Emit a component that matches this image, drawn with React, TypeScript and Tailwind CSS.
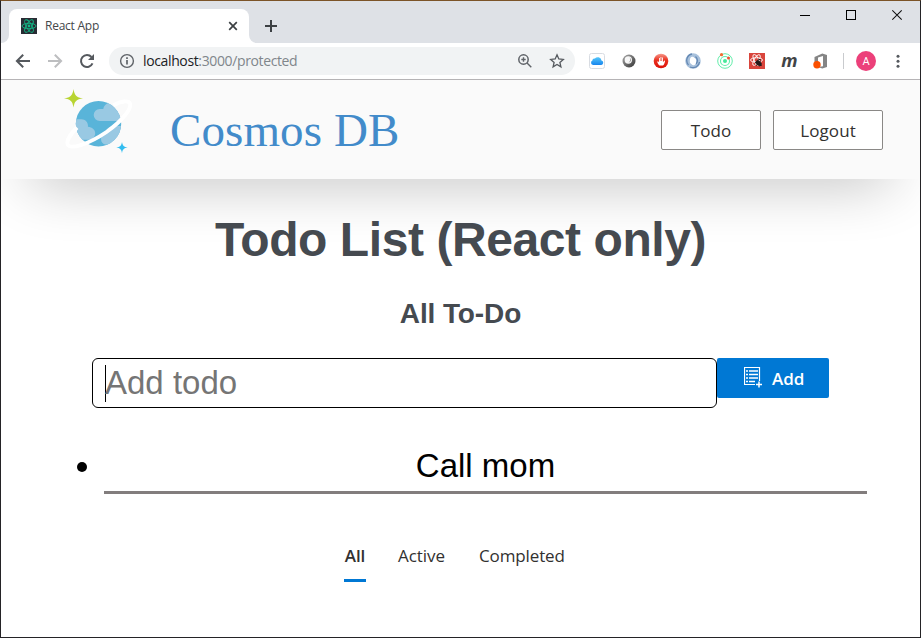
import React from "react";

const segoe = "font-['Open_Sans','Noto_Sans',sans-serif]";
const arial = "font-['Liberation_Sans',Arial,sans-serif]";

function TabStrip() {
  return (
    <div className="flex h-[42px] w-full bg-[#dee1e6]">
      <div className="flex h-full w-2 items-end bg-white">
        <div className="h-full w-2 rounded-br-lg bg-[#dee1e6]" />
      </div>
      <div className="mt-2 flex h-[34px] w-60 items-center rounded-t-lg bg-white pl-3">
        <svg width="16" height="16" viewBox="0 0 16 16">
          <rect width="16" height="16" fill="#282c34" />
          <g fill="none" stroke="#12b886" strokeWidth="0.9">
            <ellipse cx="8" cy="8" rx="7" ry="2.7" />
            <ellipse cx="8" cy="8" rx="7" ry="2.7" transform="rotate(60 8 8)" />
            <ellipse cx="8" cy="8" rx="7" ry="2.7" transform="rotate(120 8 8)" />
          </g>
          <circle cx="8" cy="8" r="1.4" fill="#12b886" />
        </svg>
        <span className={`ml-2 w-[170px] text-[12px] leading-4 tracking-[-0.25px] text-[#45474a] ${segoe}`}>React App</span>
        <svg className="ml-[13px]" width="10" height="10" viewBox="0 0 10 10">
          <path d="M1.2 1.2 8.8 8.8M8.8 1.2 1.2 8.8" stroke="#3c4043" strokeWidth="1.7" />
        </svg>
      </div>
      <div className="h-full w-2 bg-white">
        <div className="h-full w-2 rounded-bl-lg bg-[#dee1e6]" />
      </div>
      <svg className="ml-2 mt-[19px]" width="12" height="12" viewBox="0 0 12 12">
        <path d="M6 0v12M0 6h12" stroke="#3c4043" strokeWidth="2" />
      </svg>
      <div className="ml-auto mr-[17px] mt-2 flex h-3 gap-9">
        <svg width="10" height="12" viewBox="0 0 10 12"><path d="M0 6.5h10" stroke="#000" /></svg>
        <svg width="10" height="12" viewBox="0 0 10 12"><rect x=".5" y="1.5" width="9" height="9" fill="none" stroke="#000" /></svg>
        <svg width="11" height="12" viewBox="0 0 11 12"><path d="m.3 1.300 9.400 9.400M9.700 1.300.300 10.700" stroke="#111" strokeWidth="1.1" /></svg>
      </div>
    </div>
  );
}

function Extensions() {
  return (
    <div className="ml-[14px] flex items-center gap-4">
      <svg width="16" height="16" viewBox="0 0 16 16">
        <rect x=".5" y=".5" width="15" height="15" rx="2" fill="#fff" stroke="#d8dce2" />
        <defs><linearGradient id="cloud" x1="0" y1="0" x2="0" y2="1"><stop stopColor="#55c8fa" /><stop offset="1" stopColor="#1785ee" /></linearGradient></defs>
        <path d="M4.300 12a2.300 2.300 0 0 1-.9-4.400 2.100 2.100 0 0 1 2.500-2 3.700 3.700 0 0 1 6.600 1.900 2.300 2.300 0 0 1-.2 4.500z" fill="url(#cloud)" />
      </svg>
      <svg width="16" height="16" viewBox="0 0 16 16">
        <defs><linearGradient id="grey" x1="0" y1="0" x2="1" y2="1"><stop stopColor="#aaa" /><stop offset="1" stopColor="#333" /></linearGradient></defs>
        <circle cx="8" cy="8" r="6.500" fill="url(#grey)" />
        <circle cx="7.300" cy="7" r="3.700" fill="#f7f7f7" />
        <path d="M8.500 4.500c1.500 1.500 1 4-1 5 2.500-.2 3.500-3.500 1-5z" fill="#777" />
      </svg>
      <svg width="16" height="16" viewBox="0 0 16 16">
        <defs><linearGradient id="red" x1="0" y1="0" x2="0" y2="1"><stop stopColor="#f79a8c" /><stop offset=".45" stopColor="#e9301f" /><stop offset="1" stopColor="#dc1108" /></linearGradient></defs>
        <circle cx="8" cy="8" r="7.300" fill="url(#red)" />
        <path d="M6.500 12.500c-1.200-.8-1.900-2.500-2.300-3.800l.8-.4 1 1V5h.9v3h.6V4h.9v4H9V4.500h.9V8.500l.6.200.9-1.200.7.300c-.3 2-.9 4-2.100 4.700z" fill="#fff" />
      </svg>
      <svg width="16" height="16" viewBox="0 0 16 16">
        <circle cx="8" cy="8" r="5.500" fill="none" stroke="#a8c1dc" strokeWidth="4.500" />
        <path d="M7 1C2 2 0 8 3.500 12M5 14c5 2 9-1 9.500-5M10.500 3.500c2 2 2.500 5 .5 7.500" fill="none" stroke="#6488b3" strokeWidth="1.300" />
        <ellipse cx="8" cy="8" rx="2.600" ry="4.300" fill="#fff" transform="rotate(-15 8 8)" />
      </svg>
      <svg width="16" height="16" viewBox="0 0 16 16">
        <g fill="none" stroke="#62edaa"><circle cx="8" cy="8" r="7.300" strokeWidth="1" /><circle cx="8" cy="8" r="4.500" strokeWidth="1.100" /></g>
        <circle cx="8" cy="8" r="2" fill="#47e99a" /><circle cx="4.500" cy="1.700" r="1.600" fill="#f26b32" /><circle cx="11.500" cy="5" r="1.500" fill="#f05432" />
      </svg>
      <svg width="16" height="16" viewBox="0 0 16 16">
        <rect width="16" height="16" fill="#d9453c" />
        <g fill="none" stroke="#fff" strokeWidth=".9"><ellipse cx="7.500" cy="7" rx="6" ry="2.300" /><ellipse cx="7.500" cy="7" rx="6" ry="2.300" transform="rotate(60 7.500 7)" /><ellipse cx="7.500" cy="7" rx="6" ry="2.300" transform="rotate(120 7.500 7)" /></g>
        <ellipse cx="9.500" cy="10" rx="2.300" ry="3.200" fill="#251b1b" transform="rotate(-35 9.500 10)" />
        <path d="m6 9.500 7 1.500M7 12.500l5-4M9 6l3 1M10 13l3-1" stroke="#251b1b" />
      </svg>
      <span className="flex w-4 justify-center font-['Open_Sans',sans-serif] text-[18px] font-bold italic leading-4 tracking-[-1px] text-[#424446]"><span className="-mt-0.5">m</span></span>
      <svg width="16" height="16" viewBox="0 0 16 16">
        <path d="M1.500 4 9.300.5 14 2v12l-4.700 1.500L5 14l5-.8V3L5 4.500V9H1.500z" fill="#858585" />
        <circle cx="4" cy="11.700" r="3.700" fill="#fa5000" />
      </svg>
    </div>
  );
}

function Toolbar() {
  return (
    <div className="flex h-9 w-full items-center bg-white">
      <div className="ml-[14px] flex items-center gap-4">
        <svg width="16" height="16" viewBox="0 0 16 16"><path d="M15 8H2M8.200 1.700 1.900 8l6.300 6.300" fill="none" stroke="#55595e" strokeWidth="2" /></svg>
        <svg width="16" height="16" viewBox="0 0 16 16"><path d="M1 8h13M7.800 1.700 14.100 8l-6.300 6.300" fill="none" stroke="#bdbec0" strokeWidth="2" /></svg>
        <svg width="16" height="16" viewBox="0 0 16 16"><path d="M13.500 10.400A6 6 0 1 1 12.500 4" fill="none" stroke="#55595e" strokeWidth="2" /><path d="M15 1v6H9z" fill="#55595e" /></svg>
      </div>
      <div className="ml-[14px] flex h-7 w-[466px] items-center rounded-full bg-[#f1f3f4] pl-[10px] pr-[10px]">
        <svg width="16" height="16" viewBox="0 0 16 16"><circle cx="8" cy="8" r="6.400" fill="none" stroke="#5f6368" strokeWidth="1.400" /><path d="M8 7v4.500M8 4.200v1.700" stroke="#5f6368" strokeWidth="1.700" /></svg>
        <span className={`ml-2 text-[14px] leading-5 tracking-[-0.37px] text-[#80868b] ${segoe}`}><span className="text-[#202124]">localhost</span>:3000/protected</span>
        <svg className="ml-auto" width="16" height="16" viewBox="0 0 16 16"><circle cx="6.500" cy="6.500" r="4.700" fill="none" stroke="#5f6368" strokeWidth="1.500" /><path d="m10 10 4.300 4.300M6.500 4.300v4.400M4.300 6.500h4.400" stroke="#5f6368" strokeWidth="1.400" /></svg>
        <svg className="ml-4" width="16" height="16" viewBox="0 0 16 16"><path d="m8 1.800 1.800 4.200 4.500.4-3.400 3 1 4.400L8 11.500l-3.900 2.300 1-4.400-3.400-3 4.500-.4z" fill="none" stroke="#55595e" strokeWidth="1.300" /></svg>
      </div>
      <Extensions />
      <div className="ml-[14px] h-4 w-px bg-[#c9cbce]" />
      <div className="ml-3 flex size-5 items-center justify-center rounded-full bg-[#ec407a] font-['Roboto',sans-serif] text-[11px] leading-none text-white">A</div>
      <svg className="ml-5" width="4" height="16" viewBox="0 0 4 16" fill="#55595e"><circle cx="2" cy="3.300" r="1.500" /><circle cx="2" cy="8.300" r="1.500" /><circle cx="2" cy="13.300" r="1.500" /></svg>
    </div>
  );
}

function CosmosLogo() {
  return (
    <svg width="70" height="66" viewBox="0 0 70 66">
      <defs><clipPath id="planet"><circle cx="35.500" cy="34.700" r="22.700" /></clipPath></defs>
      <circle cx="35.500" cy="34.700" r="22.700" fill="#59b4d9" />
      <g clipPath="url(#planet)" fill="#99c9e3">
        <path d="M60 32H36.700a6 6 0 0 1 0-12h3.600c.7-4 4-6.500 8-6.500L60 12z" />
        <path d="M10 30.200h8.500c4 0 7 3.500 6.400 7.500 4.300.5 7.300 3 7.300 6.500 0 3.600-3 6.500-6.500 6.500H10z" />
        <path d="M60 37h-9c-5 0-8.500 3.500-8.500 7.500-3 .8-4.500 3-4.500 5.500 0 3.200 2 5 4.500 5.500H60z" />
      </g>
      <path d="M50.500 16.200C58 12 65.500 11 67 14.500c2 5-8 17.700-23.500 28.500C25 55.500 8 60.500 5 56c-2-3.200 1.500-10 9-17.500" fill="none" stroke="#fff" strokeWidth="3.900" />
      <path d="M10.500 0c1 6.600 2.900 8.400 9.500 9.300-6.600.9-8.500 3-9.500 9.300C9.600 12.300 7.600 10.200 1 9.300 7.600 8.400 9.600 6.600 10.500 0z" fill="#b8d432" />
      <path d="M59 53c.6 3.700 1.900 5 5.700 5.600-3.800.6-5.100 1.900-5.700 5.600-.6-3.700-1.900-5-5.700-5.600 3.800-.6 5.100-1.900 5.700-5.600z" fill="#32bdf0" />
    </svg>
  );
}

function SiteHeader() {
  const button = `flex h-10 items-center justify-center rounded-[2px] border border-[#8a8886] bg-white pt-0.5 text-[17px] font-medium tracking-[0.1px] text-[#323130] ${segoe}`;
  return (
    <header className="flex h-[99px] w-full bg-[#fafafa] shadow-[0_30px_60px_-30px_rgba(0,0,0,0.32)]">
      <div className="ml-[62px] mt-[9px]"><CosmosLogo /></div>
      <div className="ml-[37px] mt-[21px] whitespace-nowrap font-['Liberation_Serif','Times_New_Roman',serif] text-[47px] leading-[58px] tracking-[0.1px] text-[#428bca]">Cosmos DB</div>
      <div className="ml-auto mr-[37px] mt-[30px] flex gap-3">
        <button className={`${button} w-[100px]`}>Todo</button>
        <button className={`${button} w-[110px]`}>Logout</button>
      </div>
    </header>
  );
}

function TodoForm() {
  return (
    <form className="ml-[91px] mt-[28px] flex h-[50px] items-start">
      <div className={`flex h-[50px] w-[625px] items-center rounded-md border border-black bg-white pl-3 text-[33px] text-[#757575] ${arial}`}>
        <span className="h-[37px] w-px bg-black" />
        <span className="-ml-px leading-[38px]">Add todo</span>
      </div>
      <button className={`flex h-10 w-28 items-center rounded-[2px] bg-[#0078d4] pl-[27px] text-[17px] font-semibold text-white ${segoe}`}>
        <svg className="-mt-px" width="19" height="21" viewBox="0 0 19 21" fill="none" stroke="#fff">
          <path d="M11 17.500H.5V.5h15V14" strokeWidth="1.200" />
          <path d="M2 4h2m1 0h9M2 7.500h2m1 0h9M2 11h2m1 0h9M2 14.500h2m1 0h6" strokeWidth="1.400" />
          <path d="M15 14.500v6M12 17.500h6" strokeWidth="1.500" />
        </svg>
        <span className="ml-[9px] pt-0.5">Add</span>
      </button>
    </form>
  );
}

export default function App() {
  return (
    <div className="flex h-[638px] w-[921px] flex-col overflow-hidden border border-[#242326] border-t-[#7c5428] bg-white">
      <TabStrip />
      <Toolbar />
      <div className="h-px w-full shrink-0 bg-[#b6b4b6]" />
      <SiteHeader />
      <main className="w-full">
        <h1 className={`mt-[33px] text-center text-[48px] font-bold leading-[56px] tracking-[-0.42px] text-[#454a50] ${arial}`}>Todo List (React only)</h1>
        <h2 className={`mt-[30px] text-center text-[28px] font-bold leading-8 tracking-[-0.1px] text-[#454a50] ${arial}`}>All To-Do</h2>
        <TodoForm />
        <ul className="ml-[76px] mt-[36px] flex items-start">
          <li className="flex items-start">
            <span className="mt-[18px] size-[10px] rounded-full bg-black" />
            <div className={`ml-[17px] flex h-[50px] w-[763px] items-center justify-center border-b-[3px] border-[#827d7d] pb-[3px] text-[33px] leading-[38px] text-black ${arial}`}>Call mom</div>
          </li>
        </ul>
        <nav className={`ml-[343px] mt-[42px] flex h-[46px] text-[17px] leading-6 text-[#323130] ${segoe}`}>
          <div className="flex w-[22px] flex-col items-center justify-between border-b-[3px] border-[#0078d4] pt-2 font-semibold">All</div>
          <div className="ml-8 pt-2 tracking-[-0.05px]">Active</div>
          <div className="ml-[34px] pt-2 tracking-[-0.12px]">Completed</div>
        </nav>
      </main>
    </div>
  );
}
